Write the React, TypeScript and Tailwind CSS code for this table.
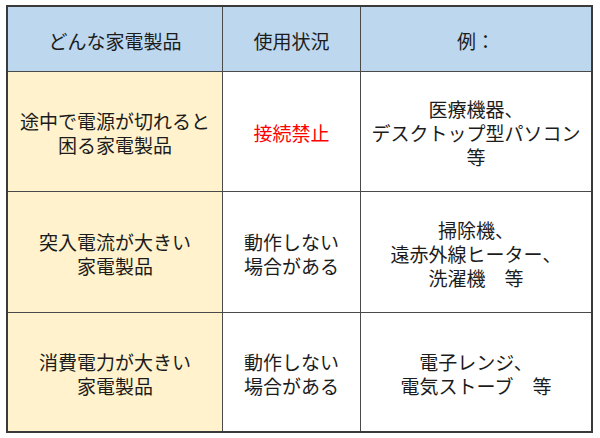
const rows = [
  {
    kind: ["途中で電源が切れると", "困る家電製品"],
    status: ["接続禁止"],
    red: true,
    examples: ["医療機器、", "デスクトップ型パソコン", "等"],
    h: "h-[120px]",
  },
  {
    kind: ["突入電流が大きい", "家電製品"],
    status: ["動作しない", "場合がある"],
    red: false,
    examples: ["掃除機、", "遠赤外線ヒーター、", "洗濯機　等"],
    h: "h-[121px]",
  },
  {
    kind: ["消費電力が大きい", "家電製品"],
    status: ["動作しない", "場合がある"],
    red: false,
    examples: ["電子レンジ、", "電気ストーブ　等"],
    h: "h-[118px]",
  },
];

function Lines({ lines }: { lines: string[] }) {
  return (
    <div className="flex flex-col items-center pt-[3px]">
      {lines.map((l) => (
        <span key={l} className="whitespace-pre">
          {l}
        </span>
      ))}
    </div>
  );
}

export default function App() {
  return (
    <div
      className="w-[600px] h-[438px] bg-white pl-[6px] pt-[5px] text-[19px] leading-[24px] text-[#1c1c1c]"
      style={{ fontFamily: '"Noto Sans CJK JP", "Noto Sans", sans-serif' }}
    >
      <div className="w-[587px] border-2 border-[#3a3a3a] grid grid-cols-[215px_138px_230px]">
        {/* Header */}
        <div className="h-[65px] bg-[#bdd7ee] border-r border-b border-[#4a4a4a] flex items-center justify-center pt-[4px]">
          どんな家電製品
        </div>
        <div className="h-[65px] bg-[#bdd7ee] border-r border-b border-[#4a4a4a] flex items-center justify-center pt-[4px]">
          使用状況
        </div>
        <div className="h-[65px] bg-[#bdd7ee] border-b border-[#4a4a4a] flex items-center justify-center pt-[4px]">
          例：
        </div>

        {rows.map((r, i) => {
          const last = i === rows.length - 1;
          const b = last ? "" : "border-b";
          return (
            <div key={i} className="contents">
              <div
                className={`${r.h} ${b} bg-[#fff2cc] border-r border-[#4a4a4a] flex items-center justify-center`}
              >
                <Lines lines={r.kind} />
              </div>
              <div
                className={`${r.h} ${b} border-r border-[#4a4a4a] flex items-center justify-center ${
                  r.red ? "text-[#ff0000]" : ""
                }`}
              >
                <Lines lines={r.status} />
              </div>
              <div className={`${r.h} ${b} border-[#4a4a4a] flex items-center justify-center`}>
                <Lines lines={r.examples} />
              </div>
            </div>
          );
        })}
      </div>
    </div>
  );
}
